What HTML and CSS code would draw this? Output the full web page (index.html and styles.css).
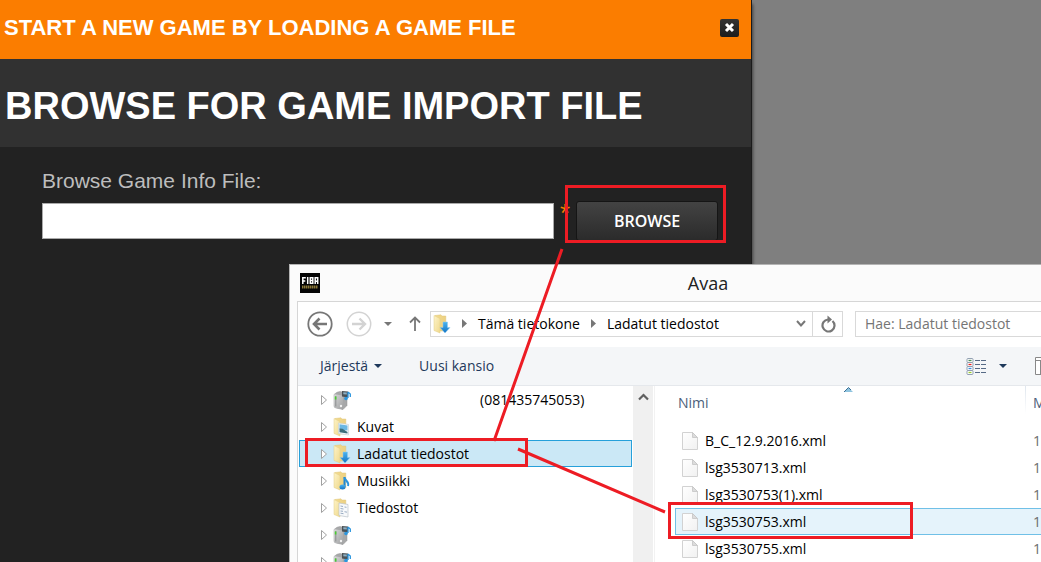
FILE: index.html
```html
<!DOCTYPE html>
<html lang="fi">
<head>
<meta charset="utf-8">
<title>Browse for game import file</title>
<link rel="stylesheet" href="styles.css">
</head>
<body>
<svg class="defs" width="0" height="0" aria-hidden="true">
  <defs>
    <linearGradient id="gold" x1="0" x2="1"><stop offset="0" stop-color="#f3dc8e"/><stop offset="1" stop-color="#ecd083"/></linearGradient>
    <linearGradient id="flap" x1="0" x2="1" y1="0" y2="1"><stop offset="0" stop-color="#fdf3c8"/><stop offset="1" stop-color="#f0d98c"/></linearGradient>
    <linearGradient id="blue" x1="0" x2="0" y1="0" y2="1"><stop offset="0" stop-color="#4db4ee"/><stop offset="1" stop-color="#1273c4"/></linearGradient>
    <linearGradient id="steel" x1="0" x2="1" y1="0" y2="1"><stop offset="0" stop-color="#d6d7d8"/><stop offset="1" stop-color="#9fa0a1"/></linearGradient>
    <linearGradient id="paper" x1="0" x2="1" y1="0" y2="1"><stop offset="0" stop-color="#fff"/><stop offset="1" stop-color="#f1f1f1"/></linearGradient>
    <symbol id="expander" viewBox="0 0 8 12"><path d="M1.5 1.5v9L6.500 6z" fill="#fff" stroke="#a0a0a0"/></symbol>
    <symbol id="folder" viewBox="0 0 18 20">
      <path d="M2 1.500 8 .8l.8 1.200h4v15H4z" fill="url(#gold)" stroke="#e0c67a" stroke-width=".5"/>
      <path d="M1 1.500l6 3v14.500L1 16.500z" fill="url(#flap)" stroke="#e3cd85" stroke-width=".5"/>
    </symbol>
    <symbol id="download" viewBox="0 0 18 20"><use href="#folder" width="18" height="20"/><path d="M10 8h4.500v5.500H17L12 19 7 13.500h3z" fill="url(#blue)" stroke="#8ccbf0" stroke-width=".5"/></symbol>
    <symbol id="pictures" viewBox="0 0 18 20"><use href="#folder" width="18" height="20"/><path d="M5.500 6l10 1.500v10.500L5.500 16.500z" fill="#f4f8fb" stroke="#c3ced5" stroke-width=".6"/><path d="M6.500 7.300l8 1.200v5l-8-1z" fill="#6bb8e4"/><path d="M6.500 11.500l3 .3 5 3.200v1.500l-8-1.200z" fill="#3d6f7c"/></symbol>
    <symbol id="music" viewBox="0 0 18 20"><use href="#folder" width="18" height="20"/><path d="M11.500 6v10" stroke="#1e86d2" stroke-width="2"/><path d="M11.500 6.500c.5 3.500 5 4 3.500 8.500" fill="none" stroke="#2a95de" stroke-width="2"/><ellipse cx="9.500" cy="16" rx="3" ry="2.500" fill="url(#blue)"/></symbol>
    <symbol id="documents" viewBox="0 0 18 20"><use href="#folder" width="18" height="20"/><path d="M6 5l9 1.500v12.500l-9-1.500z" fill="#f7f9fb" stroke="#bcc3ca" stroke-width=".7"/><path d="M7.500 8l2.500.5M7.500 10.500l3 .5M7.500 13l2.500.3M11.500 13.700l2.500.5M7.500 15.200l3 .5M11.500 9l2 .3" stroke="#8fa3bb" stroke-width=".9"/></symbol>
    <symbol id="server" viewBox="0 0 18 20">
      <path d="M1 4.500Q4 1.500 7 1.500L14 3v12.500L10 19.500 3 18Q1 17.500 1 16z" fill="#a7a8a9" stroke="#949596" stroke-width=".5"/>
      <path d="M1 4.800Q1 4 2 4.200L9 5.500Q10 6 10 7v12.500L3 18Q1 17.500 1 16z" fill="url(#steel)"/>
      <path d="M2.800 6v10.500" stroke="#8b8c8d"/><rect x="1.800" y="6.500" width="1.600" height="3" fill="#48cf2d"/>
      <circle cx="8" cy="16" r="1.200" fill="#f3f3f3"/>
      <path d="M9 1l6 .5v6l-6-1z" fill="#4a5257"/><path d="M10.300 2.300l3.500.3v2l-3.500-.3z" fill="#8caec2"/>
      <path d="M15 2v6M15 2l2.300 2v3" fill="none" stroke="#2995df" stroke-width="1.300"/><circle cx="13" cy="8.500" r="1.800" fill="#2c96dd"/>
    </symbol>
    <symbol id="file" viewBox="0 0 16 18"><path d="M.5.5h10l5 5v12H.5z" fill="url(#paper)" stroke="#d2d2d2"/><path d="M10.500.5v5h5z" fill="#dcdcdc" stroke="#c4c4c4" stroke-width=".8"/></symbol>
  </defs>
</svg>

<main class="modal">
  <header class="modal-bar">
    <h2 class="modal-title">START A NEW GAME BY LOADING A GAME FILE</h2>
    <button class="close" type="button" aria-label="Close"><svg width="19" height="18" viewBox="0 0 19 18"><path d="M6 5l7 7M13 5l-7 7" stroke="#fff" stroke-width="3"/></svg></button>
  </header>
  <div class="modal-heading"><h1>BROWSE FOR GAME IMPORT FILE</h1></div>
  <form class="import-form">
    <label class="field-label" for="game-file">Browse Game Info File:</label>
    <div class="field-row">
      <input class="field-input" id="game-file" type="text">
      <span class="required">*</span>
      <button class="browse" type="button">BROWSE</button>
    </div>
  </form>
</main>

<section class="window" aria-labelledby="window-title">
  <header class="title-bar">
    <svg class="app-icon" width="20" height="20" viewBox="0 0 20 20" aria-hidden="true"><path d="M0 0h20v20H0z" fill="#050505"/><path d="M2.800 11V4.800h3M2.800 8h2.500M7.700 4v7M10.300 10.300V4.800h2.500v5.500h-2.500zM10.300 7.600h2.500M15.200 11V4.800h2.500V11M15.200 8.200h2.500" fill="none" stroke="#fff" stroke-width="1.500"/><path d="M2 14h16" stroke="#8b7838" stroke-width="3" stroke-dasharray="1.500 .5"/></svg>
    <h2 class="window-title" id="window-title">Avaa</h2>
  </header>
  <div class="client">
    <nav class="nav-row">
      <button class="icon-button back" type="button" aria-label="Takaisin"><svg width="26" height="26" viewBox="0 0 26 26"><circle cx="13" cy="13" r="11.700" fill="none" stroke="#777" stroke-width="1.800"/><path d="M20 13H8M12.500 7.500L7 13l5.500 5.500" fill="none" stroke="#777" stroke-width="2.600"/></svg></button>
      <button class="icon-button forward" type="button" aria-label="Eteenpäin"><svg width="26" height="26" viewBox="0 0 26 26"><circle cx="13" cy="13" r="11.700" fill="none" stroke="#d3d3d3" stroke-width="1.500"/><path d="M6 13h12M13.500 7.500L19 13l-5.500 5.500" fill="none" stroke="#d3d3d3" stroke-width="2.400"/></svg></button>
      <button class="icon-button recent" type="button" aria-label="Viimeisimmät"><svg width="8" height="4" viewBox="0 0 8 4"><path d="M0 0h8L4 4z" fill="#777"/></svg></button>
      <button class="icon-button up" type="button" aria-label="Ylös"><svg width="12" height="15" viewBox="0 0 12 15"><path d="M6 15V2M1 6.500L6 1.500l5 5" fill="none" stroke="#777" stroke-width="1.800"/></svg></button>
      <div class="address">
        <div class="crumbs">
          <svg width="18" height="20"><use href="#download"/></svg>
          <svg class="crumb-arrow" width="5" height="9" viewBox="0 0 5 9"><path d="M0 0v9l5-4.500z" fill="#777"/></svg>
          <span class="crumb">Tämä tietokone</span>
          <svg class="crumb-arrow" width="5" height="9" viewBox="0 0 5 9"><path d="M0 0v9l5-4.500z" fill="#777"/></svg>
          <span class="crumb">Ladatut tiedostot</span>
        </div>
        <button class="icon-button history" type="button" aria-label="Edelliset sijainnit"><svg width="10" height="7" viewBox="0 0 10 7"><path d="M1 1l4 4.500L9 1" fill="none" stroke="#777" stroke-width="2"/></svg></button>
        <button class="icon-button refresh" type="button" aria-label="Päivitä"><svg width="16" height="18" viewBox="0 0 16 18"><path d="M12.500 6A6 6 0 1 1 8 4.500" fill="none" stroke="#777" stroke-width="2.200"/><path d="M7.500.5v8l4.500-4z" fill="#777"/></svg></button>
      </div>
      <input class="search" type="search" placeholder="Hae: Ladatut tiedostot" aria-label="Hae">
    </nav>
    <div class="toolbar">
      <button class="tool" type="button">Järjestä<svg width="8" height="4" viewBox="0 0 8 4"><path d="M0 0h8L4 4z" fill="#1e395b"/></svg></button>
      <button class="tool" type="button">Uusi kansio</button>
      <button class="tool view" type="button" aria-label="Näkymä"><svg width="20" height="17" viewBox="0 0 20 17"><g fill="#fff" stroke="#8796a9" stroke-width=".9"><rect x="1" y=".5" width="6" height="4" rx="1"/><rect x="1" y="4.500" width="6" height="4" rx="1"/><rect x="1" y="8.500" width="6" height="4" rx="1"/><rect x="1" y="12.500" width="6" height="4" rx="1"/></g><path d="M2.500 2.500h3" stroke="#4b8d55" stroke-width="1.300"/><path d="M2.500 6.500h3" stroke="#e22" stroke-width="1.300"/><path d="M2.500 10.500h3" stroke="#3a8be0" stroke-width="1.300"/><path d="M2.500 14.500h3" stroke="#9bcb2c" stroke-width="1.300"/><path d="M9 2.500h11M9 6.500h11M9 10.500h11M9 14.500h11" stroke="#566a86" stroke-dasharray="5 1"/></svg><svg width="8" height="4" viewBox="0 0 8 4"><path d="M0 0h8L4 4z" fill="#1e395b"/></svg></button>
      <button class="tool preview" type="button" aria-label="Esikatselu"><svg width="20" height="18" viewBox="0 0 20 18"><path d="M.5.500h19v17H.5zM.5 3.500h19M5.500 3.500v14" fill="#fff" stroke="#888"/></svg></button>
    </div>
    <div class="panes">
      <ul class="tree">
        <li class="tree-item"><svg width="8" height="12"><use href="#expander"/></svg><svg width="18" height="20"><use href="#server"/></svg><span class="serial">(081435745053)</span></li>
        <li class="tree-item"><svg width="8" height="12"><use href="#expander"/></svg><svg width="18" height="20"><use href="#pictures"/></svg><span>Kuvat</span></li>
        <li class="tree-item selected"><svg width="8" height="12"><use href="#expander"/></svg><svg width="18" height="20"><use href="#download"/></svg><span>Ladatut tiedostot</span></li>
        <li class="tree-item"><svg width="8" height="12"><use href="#expander"/></svg><svg width="18" height="20"><use href="#music"/></svg><span>Musiikki</span></li>
        <li class="tree-item"><svg width="8" height="12"><use href="#expander"/></svg><svg width="18" height="20"><use href="#documents"/></svg><span>Tiedostot</span></li>
        <li class="tree-item"><svg width="8" height="12"><use href="#expander"/></svg><svg width="18" height="20"><use href="#server"/></svg></li>
        <li class="tree-item"><svg width="8" height="12"><use href="#expander"/></svg><svg width="18" height="20"><use href="#server"/></svg></li>
      </ul>
      <div class="scrollbar"><button class="icon-button" type="button" aria-label="Vieritä ylös"><svg width="11" height="8" viewBox="0 0 11 8"><path d="M1 6.500L5.500 2 10 6.500" fill="none" stroke="#606060" stroke-width="2.200"/></svg></button></div>
      <div class="files">
        <table class="file-table">
          <thead><tr><th class="name">Nimi<svg class="sort" width="9" height="5" viewBox="0 0 9 5"><path d="M0 5l4.500-4.500L9 5z" fill="#8fc4df"/><path d="M0 5l4.500-4.500L7 3" fill="none" stroke="#3b6f94"/></svg></th><th class="date">M</th></tr></thead>
          <tbody>
            <tr><td class="name"><span class="file"><svg width="16" height="18"><use href="#file"/></svg>B_C_12.9.2016.xml</span></td><td class="date">1</td></tr>
            <tr><td class="name"><span class="file"><svg width="16" height="18"><use href="#file"/></svg>lsg3530713.xml</span></td><td class="date">1</td></tr>
            <tr><td class="name"><span class="file"><svg width="16" height="18"><use href="#file"/></svg>lsg3530753(1).xml</span></td><td class="date">1</td></tr>
            <tr class="hovered"><td class="name"><span class="file"><svg width="16" height="18"><use href="#file"/></svg>lsg3530753.xml</span></td><td class="date">1</td></tr>
            <tr><td class="name"><span class="file"><svg width="16" height="18"><use href="#file"/></svg>lsg3530755.xml</span></td><td class="date">1</td></tr>
          </tbody>
        </table>
      </div>
    </div>
  </div>
</section>

<svg class="marks" width="1041" height="562" viewBox="0 0 1041 562" aria-hidden="true">
  <g fill="none" stroke="#ed1c24" stroke-width="3">
    <path d="M566.500 186.500h158v55h-158zM306.500 439.500h220v26h-220zM669.500 503.500h242v34h-242z"/>
    <path d="M562 249L494 441M518 449L665 512"/>
  </g>
</svg>
</body>
</html>
```
FILE: styles.css
```css
* { box-sizing: border-box; }

body {
  margin: 0;
  height: 100vh;
  overflow: hidden;
  position: relative;
  background: #7f7f7f;
  font-family: "Open Sans", "Noto Sans", sans-serif;
  font-size: 14px;
  line-height: 20px;
}

h1, h2 { margin: 0; }
button { font: inherit; cursor: pointer; }
svg { display: block; flex: none; }
.defs { position: absolute; }

/* Import dialog */
.modal {
  max-width: 752px;
  height: 100%;
  background: #222;
  border-right: 1px solid #1b1b1b;
  box-shadow: 1px 4px 3px rgba(0, 0, 0, .5);
  color: #fff;
  font-family: "Liberation Sans", Arial, sans-serif;
}
.modal-bar {
  display: flex;
  align-items: center;
  justify-content: space-between;
  height: 59px;
  padding: 0 12px 3px 4px;
  background: #fb7d00;
}
.modal-title { font-size: 22px; line-height: 28px; }
.close {
  display: flex;
  padding: 0;
  border: 0;
  border-radius: 2px;
  background: linear-gradient(#333, #1c1c1c);
}
.modal-heading {
  height: 88px;
  padding: 23px 5px;
  background: #313131;
}
.modal-heading h1 { font-size: 38px; line-height: 48px; white-space: nowrap; }
.import-form { padding: 20px 33px 0 42px; }
.field-label {
  display: block;
  margin-bottom: 6px;
  color: #bdbdbd;
  font-size: 21px;
  line-height: 28px;
}
.field-row { display: flex; align-items: center; }
.field-input {
  flex: 1;
  min-width: 0;
  height: 36px;
  padding: 4px 8px;
  border: 1px solid #aaa;
  background: #fff;
  font-size: 20px;
}
.required {
  align-self: flex-start;
  width: 22px;
  padding-left: 6px;
  color: #f58000;
  font-size: 26px;
  line-height: 24px;
}
.browse {
  width: 142px;
  height: 40px;
  padding: 0;
  border: 1px solid #151515;
  border-radius: 3px;
  background: linear-gradient(#434343, #2b2b2b);
  color: #fff;
  font-family: "Open Sans", sans-serif;
  font-size: 16px;
  font-weight: 600;
}

/* File chooser window */
.window {
  position: absolute;
  inset: 264px 0 0 289px;
  display: flex;
  flex-direction: column;
  overflow: hidden;
  padding-left: 7px;
  border: solid #b4b4b4;
  border-width: 1px 0 0 1px;
  background: #fbfbfb;
}
.title-bar { display: flex; align-items: center; height: 36px; padding-left: 3px; }
.window-title {
  flex: 1;
  padding-left: 55px;
  color: #222;
  font-size: 18px;
  font-weight: 400;
  line-height: 26px;
  text-align: center;
}
.client {
  flex: 1;
  display: flex;
  flex-direction: column;
  min-height: 0;
  border: solid #d6d6d6;
  border-width: 1px 0 0 1px;
  background: #fff;
}
.icon-button {
  display: flex;
  align-items: center;
  justify-content: center;
  padding: 0;
  border: 0;
  background: none;
}
.nav-row { display: flex; align-items: center; height: 45px; padding: 0 0 2px 9px; }
.forward { margin-left: 13px; }
.recent { margin-left: 12px; }
.up { margin-left: 17px; }
.address {
  flex: 1;
  display: flex;
  height: 26px;
  margin-left: 9px;
  border: 1px solid #d9d9d9;
}
.crumbs { flex: 1; display: flex; align-items: center; padding-left: 2px; white-space: nowrap; }
.crumb-arrow { margin: 0 11px; }
.history { width: 22px; }
.refresh { width: 30px; border-left: 1px solid #d9d9d9; }
.search {
  width: 186px;
  height: 26px;
  margin-left: 12px;
  padding: 0 0 0 9px;
  border: 1px solid #d9d9d9;
  border-right: 0;
  border-radius: 0;
  color: #222;
  font: inherit;
}
.search::placeholder { color: #757575; opacity: 1; }
.toolbar {
  display: flex;
  align-items: center;
  height: 39px;
  border-bottom: 1px solid #e5e8ec;
  background: #f4f6f8;
}
.tool {
  display: flex;
  align-items: center;
  gap: 6px;
  margin-left: 22px;
  padding: 0;
  border: 0;
  background: none;
  color: #1e395b;
}
.tool + .tool { margin-left: 37px; }
.tool.view { gap: 13px; margin-left: auto; }
.tool.preview { width: 6px; margin-left: 28px; overflow: hidden; }

.panes { flex: 1; display: flex; min-height: 0; }
.tree {
  width: 335px;
  margin: 0;
  padding: 0 1px;
  overflow: hidden;
  list-style: none;
}
.tree-item {
  display: flex;
  align-items: center;
  height: 27px;
  padding-left: 20px;
  border: 1px solid transparent;
  white-space: nowrap;
}
.tree-item svg + svg { margin: 0 6px 0 5px; }
.serial { padding-left: 123px; }
.selected { border-color: #26a0da; background: #cbe8f6; }
.scrollbar { width: 20px; background: #f0f0f0; }
.scrollbar .icon-button { width: 100%; height: 21px; }

.files { flex: 1; overflow: hidden; margin-left: 1px; border-left: 1px solid #f2f2f2; }
.file-table {
  width: 100%;
  padding-left: 20px;
  border-spacing: 0;
  table-layout: fixed;
}
.file-table th {
  position: relative;
  height: 41px;
  padding: 0 0 8px 3px;
  color: #4c607a;
  font-weight: 400;
  text-align: left;
}
.file-table td { height: 27px; padding: 0; border: solid transparent; border-width: 1px 0; }
.file-table .date { width: 16px; padding-left: 8px; color: #6d6d6d; overflow: hidden; }
.file-table th.date {
  color: #4c607a;
  background: linear-gradient(#dfe6ee, #fff) left top / 1px 28px no-repeat;
}
.sort { position: absolute; top: 1px; left: 169px; }
.file { display: flex; align-items: center; gap: 7px; padding-left: 7px; }
.hovered td { border-color: #70c0e7; background: #e5f3fb; }
.hovered td:first-child { border-left: 1px solid #70c0e7; }
.hovered .file { padding-left: 6px; }

.marks { position: absolute; top: 0; left: 0; pointer-events: none; }
```
